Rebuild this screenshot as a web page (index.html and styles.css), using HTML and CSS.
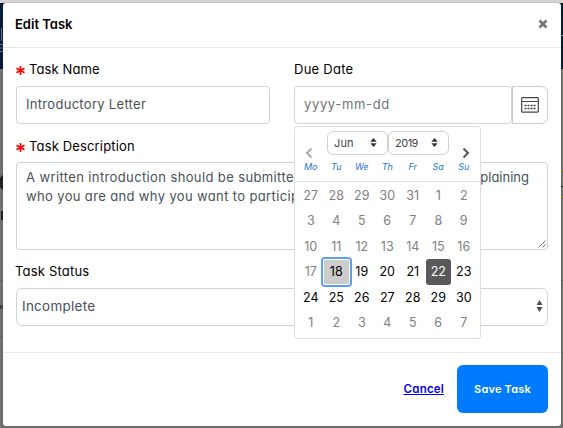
FILE: index.html
```html
<!DOCTYPE html>
<html lang="en">
<head>
<meta charset="utf-8">
<title>Edit Task</title>
<link rel="stylesheet" href="styles.css">
</head>
<body>
<div class="backdrop"><div class="strip"></div><div class="navbar"></div>
  <svg class="behind" width="563" height="428" viewBox="0 0 563 428"><path d="M1.500 28v13M0 44.500h3M0 48h2.500M0 51.500h3" stroke="#6b7888"/><path d="M0 178q2-3 3-3v15q-1 0-3-3zM1 211h2v9h-2z" fill="#222"/><path d="M0 280.500h3M0 337h3M561 280.500h2" stroke="#5c5c5c"/><path d="M0 305h3v4h-3z" fill="#444"/><path d="M561 35.500h2" stroke="#8894a4"/><path d="M561 170.500h2M561 196.500h2" stroke="#a08a20"/><path d="M561 186.500h2" stroke="#222"/></svg>
</div>
<div class="modal">
  <header class="head"><h1>Edit Task</h1>
    <svg class="close" width="10" height="10" viewBox="0 0 10 10"><path d="M1.500 1.500l7 7M8.500 1.500l-7 7" stroke="#777" stroke-width="2.800"/></svg>
  </header>
  <main class="body">
    <div class="row">
      <section class="name">
        <div class="label"><svg class="star" width="9" height="9" viewBox="0 0 9 9"><path d="M4.500 0v9M.5 2.300l8 4.400M8.500 2.300l-8 4.400" stroke="#f00" stroke-width="1.700"/></svg><span class="t-name">Task Name</span></div>
        <div class="field"><span class="t-intro">Introductory Letter</span></div>
      </section>
      <section class="due">
        <div class="label"><span class="t-due">Due Date</span></div>
        <div class="group">
          <div class="field placeholder"><span class="t-ph">yyyy-mm-dd</span></div>
          <div class="calbtn"><svg width="18" height="16" viewBox="0 0 18 16"><path d="M1.500 .7h15q.8 0 .8.8v12.800q0 .8-.8.8h-15q-.8 0-.8-.8V1.500q0-.8.8-.8zM.7 4.500h16.600" fill="none" stroke="#444" stroke-width="1.200"/><path d="M3.500 8.500h11M3.500 11.500h11" stroke="#444" stroke-width="1.700" stroke-dasharray="2 1"/></svg></div>
        </div>
        <div class="calendar">
          <div class="calhead">
            <svg class="prev" width="8" height="12" viewBox="0 0 8 12"><path d="M6.500 1.500L2 6l4.500 4.500" fill="none" stroke="#aaa" stroke-width="2"/></svg>
            <div class="pick"><span class="t-jun">Jun</span><svg width="7" height="9" viewBox="0 0 7 9"><path d="M3.500 0L6.700 3.800H.3zM3.500 9L.3 5.200h6.400z" fill="#333"/></svg></div>
            <div class="pick"><span>2019</span><svg width="7" height="9" viewBox="0 0 7 9"><path d="M3.500 0L6.700 3.800H.3zM3.500 9L.3 5.200h6.400z" fill="#333"/></svg></div>
            <svg class="next" width="8" height="12" viewBox="0 0 8 12"><path d="M1.500 1.500L6 6l-4.500 4.500" fill="none" stroke="#555" stroke-width="2"/></svg>
          </div>
          <div class="week"><i>Mo</i><i>Tu</i><i>We</i><i>Th</i><i>Fr</i><i>Sa</i><i>Su</i></div>
          <div class="days">
            <span>27</span><span>28</span><span>29</span><span>30</span><span>31</span><span>1</span><span>2</span>
            <span>3</span><span>4</span><span>5</span><span>6</span><span>7</span><span>8</span><span>9</span>
            <span>10</span><span>11</span><span>12</span><span>13</span><span>14</span><span>15</span><span>16</span>
            <span>17</span><span class="on today">18</span><span class="on">19</span><span class="on">20</span><span class="on">21</span><span class="picked">22</span><span class="on">23</span>
            <span class="on">24</span><span class="on">25</span><span class="on">26</span><span class="on">27</span><span class="on">28</span><span class="on">29</span><span class="on">30</span>
            <span>1</span><span>2</span><span>3</span><span>4</span><span>5</span><span>6</span><span>7</span>
          </div>
        </div>
      </section>
    </div>
    <div class="label desc"><svg class="star" width="9" height="9" viewBox="0 0 9 9"><path d="M4.500 0v9M.5 2.300l8 4.400M8.500 2.300l-8 4.400" stroke="#f00" stroke-width="1.700"/></svg><span class="t-desc">Task Description</span></div>
    <div class="area">
      <div class="line"><span class="t-l1">A written introduction should be submitted</span><span class="t-end">explaining</span></div>
      <div class="line"><span class="t-l2">who you are and why you want to participate</span></div>
      <svg class="grip" width="8" height="8" viewBox="0 0 8 8"><path d="M.5 7.500l7-7M4.500 7.500l3-3" stroke="#555" stroke-width=".8"/></svg>
    </div>
    <div class="label status"><span class="t-status">Task Status</span></div>
    <div class="field select"><span class="t-inc">Incomplete</span><svg width="7" height="12" viewBox="0 0 7 12"><path d="M3.500 0l3 5h-6zM3.500 12l-3-5h6z" fill="#495057"/></svg></div>
  </main>
  <footer class="foot"><a href="#">Cancel</a><button type="button">Save Task</button></footer>
</div>
</body>
</html>
```
FILE: styles.css
```css
* { box-sizing: border-box; }
body { margin: 0; width: 563px; height: 428px; overflow: hidden; position: relative; padding: 3px 2px 2px 3px; font: 380 13px/20px Inter, "Open Sans", sans-serif; font-feature-settings: "cv11" 1; color: #000; white-space: nowrap; }
svg { display: block; flex: none; }
.backdrop { position: absolute; inset: 0; z-index: -1; background: #717171; }
.behind { position: absolute; inset: 0; }
.strip { height: 3px; background: #d3d3d3; }
.navbar { height: 66px; background: #001c3a; }
.modal { width: 558px; height: 423px; background: #fff; border-radius: 3px; box-shadow: 0 0 1px #333; display: flex; flex-direction: column; }
.head { height: 45px; flex: none; border-bottom: 1px solid #e4e6e8; padding: 0 13px 2px 12px; display: flex; align-items: center; justify-content: space-between; }
h1 { margin: 0; font-size: 13px; font-weight: 600; color: #000; }
.body { height: 304px; flex: none; padding: 11px 13px 0; }
.row { display: flex; justify-content: space-between; }
.name { width: 254px; }
.due { width: 254px; position: relative; }
.label { height: 20px; display: flex; align-items: center; }
.star { margin-right: 4px; position: relative; top: 1px; }
.row .label { margin-bottom: 7px; }
.field { height: 38px; border: 1px solid #ced4da; border-radius: 4px; background: #fff; color: #495057; display: flex; align-items: center; padding: 0 9px 2px; }
.t-name { letter-spacing: .1px; }
.t-due { letter-spacing: .25px; }
.t-intro { letter-spacing: .3px; }
.t-ph { letter-spacing: .65px; }
.t-desc { letter-spacing: .15px; }
.t-l1 { letter-spacing: .38px; }
.t-l2 { letter-spacing: .36px; }
.t-status { letter-spacing: .2px; }
.t-inc { font-size: 13.500px; letter-spacing: .25px; }
.group { display: flex; }
.group .field { width: 218px; }
.placeholder { color: #6c757d; }
.calbtn { width: 36px; height: 38px; border: 1px solid #ccc; border-radius: 0 7px 7px 0; display: flex; align-items: center; justify-content: center; padding-bottom: 1px; }
.desc { margin-top: 12px; margin-bottom: 6px; }
.area { height: 88px; border: 1px solid #ced4da; border-radius: 4px; padding: 5px 9px; color: #495057; position: relative; }
.line { height: 19px; line-height: 19px; width: 503px; display: flex; justify-content: space-between; }
.grip { position: absolute; right: 1px; bottom: 1px; }
.status { margin-top: 11px; margin-bottom: 7px; margin-left: -1px; }
.select { border-radius: 6px; justify-content: space-between; padding: 0 4px 2px 5px; }
.calendar { position: absolute; left: 0; top: 67px; width: 187px; height: 213px; background: #fff; border: 1px solid #ddd; border-radius: 3px; z-index: 2; padding-top: 4px; }
.calhead { height: 24px; display: flex; padding-left: 10px; }
.prev { margin: 16px 14px 0 0; }
.next { margin: 16px 0 0 13px; }
.pick { width: 61px; height: 24px; flex: none; border: 1px solid #ccd1da; border-radius: 6px; font-size: 11px; display: flex; align-items: center; justify-content: space-between; padding: 0 10px 1px 6px; color: #444; letter-spacing: -.5px; }
.t-jun { letter-spacing: .1px; }
.week { height: 27px; display: grid; grid-template-columns: repeat(7, 25.5px); padding-left: 3px; border-bottom: 1px solid #ddd; text-align: center; font-size: 9px; font-weight: 400; line-height: 24px; color: #1976d8; }
.days { display: grid; grid-template-columns: repeat(7, 25.5px); grid-auto-rows: 25.4px; padding: 1px 0 0 3px; text-align: center; font-size: 12.5px; line-height: 25px; color: #808080; }
.days .on { color: #000; font-weight: 400; }
.days .today { background: #ccc; box-shadow: inset 0 0 0 1px #fff, 0 0 0 2px #5b9df9; z-index: 1; border-radius: 2px; margin: 0 -1px; line-height: 25px; }
.days .picked { background: #595959; color: #fff; border-radius: 3px; }
.foot { flex: 1; border-top: 1px solid #e4e6e8; display: flex; align-items: center; justify-content: flex-end; padding: 0 13px 2px 0; gap: 13px; font-size: 11px; letter-spacing: .2px; }
.foot a { color: #00e; font-weight: 600; font-size: 11.5px; }
button { width: 91px; height: 48px; border: 0; border-radius: 6px; background: #007bff; color: #fff; font: inherit; font-weight: 600; font-feature-settings: inherit; letter-spacing: inherit; padding: 0; }
```
